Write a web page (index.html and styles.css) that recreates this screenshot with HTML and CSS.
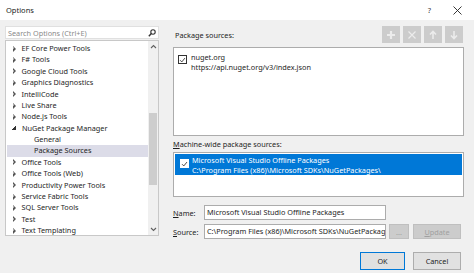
FILE: index.html
```html
<!DOCTYPE html>
<html>
<head>
<meta charset="utf-8">
<link rel="stylesheet" href="styles.css">
</head>
<body>
<div class="window">
  <div class="titlebar">
    <span class="title">Options</span>
    <span class="tb-help">?</span>
    <span class="tb-close">
      <svg width="9" height="9" viewBox="0 0 9 9"><path d="M0.5 0.5 L8.5 8.5 M8.5 0.5 L0.5 8.5" stroke="#222" stroke-width="0.9"/></svg>
    </span>
  </div>
  <div class="body">
    <div class="left">
      <div class="search">
        <span class="search-ph">Search Options (Ctrl+E)</span>
        <svg class="search-ic" width="8" height="8" viewBox="0 0 8 8"><circle cx="5" cy="3" r="2.2" fill="none" stroke="#333" stroke-width="1.1"/><path d="M3.4 4.6 L0.8 7.2" stroke="#333" stroke-width="1.4"/></svg>
      </div>
      <div class="tree">
        <div class="tree-items">
          <div class="row"><span class="arr"></span>EF Core Power Tools</div>
          <div class="row"><span class="arr"></span>F# Tools</div>
          <div class="row"><span class="arr"></span>Google Cloud Tools</div>
          <div class="row"><span class="arr"></span>Graphics Diagnostics</div>
          <div class="row"><span class="arr"></span>IntelliCode</div>
          <div class="row"><span class="arr"></span>Live Share</div>
          <div class="row"><span class="arr"></span>Node.js Tools</div>
          <div class="row"><span class="arr open"></span>NuGet Package Manager</div>
          <div class="row child">General</div>
          <div class="row child sel">Package Sources</div>
          <div class="row"><span class="arr"></span>Office Tools</div>
          <div class="row"><span class="arr"></span>Office Tools (Web)</div>
          <div class="row"><span class="arr"></span>Productivity Power Tools</div>
          <div class="row"><span class="arr"></span>Service Fabric Tools</div>
          <div class="row"><span class="arr"></span>SQL Server Tools</div>
          <div class="row"><span class="arr"></span>Test</div>
          <div class="row"><span class="arr"></span>Text Templating</div>
        </div>
        <div class="vscroll">
          <svg class="sarrow" width="7" height="5" viewBox="0 0 7 5"><path d="M1 4 L3.5 1.5 L6 4" fill="none" stroke="#606060" stroke-width="1.1"/></svg>
          <div class="track"><div class="thumb"></div></div>
          <svg class="sarrow" width="7" height="5" viewBox="0 0 7 5"><path d="M1 1 L3.5 3.5 L6 1" fill="none" stroke="#606060" stroke-width="1.1"/></svg>
        </div>
      </div>
    </div>
    <div class="right">
      <div class="toolbar">
        <span class="lbl">Package sources:</span>
        <div class="tbtns">
          <span class="tbtn"><svg width="10" height="10" viewBox="0 0 10 10"><path d="M5 1 V9 M1 5 H9" stroke="#ececec" stroke-width="2.2"/></svg></span>
          <span class="tbtn"><svg width="10" height="10" viewBox="0 0 10 10"><path d="M1.5 1.5 L8.5 8.5 M8.5 1.5 L1.5 8.5" stroke="#ececec" stroke-width="1.2"/></svg></span>
          <span class="tbtn"><svg width="10" height="10" viewBox="0 0 10 10"><path d="M5 9 V2 M2 4.5 L5 1.5 L8 4.5" fill="none" stroke="#ececec" stroke-width="1.6"/></svg></span>
          <span class="tbtn"><svg width="10" height="10" viewBox="0 0 10 10"><path d="M5 1 V8 M2 5.5 L5 8.5 L8 5.5" fill="none" stroke="#ececec" stroke-width="1.6"/></svg></span>
        </div>
      </div>
      <div class="listbox pkg">
        <div class="src">
          <span class="cb"><svg width="8" height="8" viewBox="0 0 8 8"><path d="M1.2 4.2 L3.2 6.2 L6.8 1.8" fill="none" stroke="#333" stroke-width="1"/></svg></span>
          <div class="src-text">
            <div>nuget.org</div>
            <div>https://api.nuget.org/v3/index.json</div>
          </div>
        </div>
      </div>
      <div class="lbl mw"><u>M</u>achine-wide package sources:</div>
      <div class="listbox machine">
        <div class="src selsrc">
          <span class="cb"><svg width="8" height="8" viewBox="0 0 8 8"><path d="M1.2 4.2 L3.2 6.2 L6.8 1.8" fill="none" stroke="#333" stroke-width="1"/></svg></span>
          <div class="src-text">
            <div>Microsoft Visual Studio Offline Packages</div>
            <div>C:\Program Files (x86)\Microsoft SDKs\NuGetPackages\</div>
          </div>
        </div>
      </div>
      <div class="field">
        <span class="flbl"><u>N</u>ame:</span>
        <span class="input">Microsoft Visual Studio Offline Packages</span>
      </div>
      <div class="field">
        <span class="flbl"><u>S</u>ource:</span>
        <span class="input">C:\Program Files (x86)\Microsoft SDKs\NuGetPackag</span>
        <span class="btn dis dots">...</span>
        <span class="btn dis upd"><u>U</u>pdate</span>
      </div>
      <div class="actions">
        <span class="btn ok">OK</span>
        <span class="btn cancel">Cancel</span>
      </div>
    </div>
  </div>
  <div class="footer"></div>
</div>
</body>
</html>
```
FILE: styles.css
```css
* { box-sizing: border-box; }
html, body { margin: 0; padding: 0; }
body {
  width: 474px;
  height: 276px;
  background: #ffffff;
  font-family: "Noto Sans", "Open Sans", sans-serif;
  font-size: 7.3px;
  color: #1e1e1e;
  overflow: hidden;
}
.window { width: 474px; height: 276px; display: flex; flex-direction: column; }
.titlebar {
  height: 20px;
  flex: none;
  background: #ffffff;
  display: flex;
  align-items: center;
}
.title { margin-left: 6px; font-size: 7.5px; color: #222; }
.tb-help { margin-left: auto; margin-right: 22px; font-size: 7.5px; color: #333; }
.tb-close { margin-right: 12px; display: flex; }
.body {
  flex: none;
  height: 253px;
  background: #f0f0f0;
  display: flex;
}
.footer { flex: 1; background: #ffffff; }

.left {
  width: 159px;
  padding: 6px 0 0 5px;
  display: flex;
  flex-direction: column;
}
.search {
  height: 13px;
  background: #ffffff;
  border: 1px solid #e0e0e0;
  display: flex;
  align-items: center;
  padding-left: 2px;
  padding-right: 2px;
}
.search-ph { color: #8a8a8a; }
.search-ic { margin-left: auto; }
.tree {
  margin-top: 1px;
  height: 196px;
  background: #ffffff;
  border: 1px solid #c8c8c8;
  display: flex;
}
.tree-items { flex: 1; padding-top: 2px; padding-left: 1px; }
.row {
  height: 11.375px;
  line-height: 11.375px;
  display: flex;
  align-items: center;
  white-space: nowrap;
}
.row.child { padding-left: 27px; }
.row.sel { background: #dcdce8; }
.arr {
  width: 0; height: 0;
  margin-left: 6px;
  margin-right: 5.5px;
  border-top: 3px solid transparent;
  border-bottom: 3px solid transparent;
  border-left: 3.5px solid #555;
  position: relative;
}
.arr::after {
  content: "";
  position: absolute;
  left: -3px;
  top: -1.6px;
  border-top: 1.6px solid transparent;
  border-bottom: 1.6px solid transparent;
  border-left: 1.8px solid #ffffff;
}
.arr.open {
  border: none;
  width: 4px; height: 4px;
  margin-left: 5px;
  margin-right: 6px;
  background: linear-gradient(135deg, transparent 50%, #333 50%);
}
.arr.open::after { display: none; }
.vscroll {
  width: 10px;
  background: #f0f0f0;
  display: flex;
  flex-direction: column;
  align-items: center;
}
.sarrow { flex: none; margin: 3px 0; }
.track { flex: 1; width: 100%; position: relative; }
.thumb {
  position: absolute;
  left: 1px; right: 1px;
  top: 61px;
  height: 72px;
  background: #cdcdcd;
}

.right {
  flex: 1;
  padding: 6px 10px 0 14px;
  display: flex;
  flex-direction: column;
}
.toolbar {
  height: 17px;
  display: flex;
  align-items: center;
}
.lbl { padding-left: 2px; }
.toolbar .lbl { margin-top: 1px; }
.tbtns { margin-left: auto; display: flex; gap: 3px; margin-right: 1px; }
.tbtn {
  width: 18px; height: 17px;
  background: #cccccc;
  display: flex;
  align-items: center;
  justify-content: center;
}
.listbox {
  background: #ffffff;
  border: 1px solid #acacac;
}
.pkg { margin-top: 4px; height: 89px; padding: 4px 0 0 4px; }
.src { display: flex; align-items: flex-start; }
.cb {
  width: 9px; height: 9px;
  border: 1px solid #333;
  background: #fff;
  display: flex;
  align-items: center;
  justify-content: center;
  margin-top: 3px;
  margin-right: 4px;
  flex: none;
}
.src-text { line-height: 10px; white-space: nowrap; }
.mw { margin-top: 3px; height: 10px; line-height: 10px; padding-left: 0; }
.machine { margin-top: 3px; height: 45px; padding: 1px; }
.selsrc {
  background: #0078d7;
  color: #ffffff;
  height: 21px;
  padding: 1px 0 0 5px;
}
.selsrc .cb { border-color: #fff; margin-top: 4px; margin-right: 3px; }
.field {
  display: flex;
  align-items: center;
  height: 15px;
  margin-top: 8px;
}
.field + .field { margin-top: 4px; }
.flbl { width: 31px; }
.input {
  width: 182px;
  height: 15px;
  line-height: 13px;
  background: #fff;
  border: 1px solid #acacac;
  padding: 0 2px;
  white-space: nowrap;
  overflow: hidden;
}
.btn {
  display: flex;
  align-items: center;
  justify-content: center;
  background: #e1e1e1;
  border: 1px solid #adadad;
}
.btn.dis { background: #cccccc; border-color: #bfbfbf; color: #a0a0a0; }
.dots { width: 20px; height: 15px; margin-left: 3px; }
.upd { width: 48px; height: 15px; margin-left: 4px; }
.actions {
  display: flex;
  justify-content: flex-end;
  gap: 8px;
  margin-top: 13px;
  padding-right: 3px;
}
.ok { width: 45px; height: 18px; border: 1px solid #0078d7; }
.cancel { width: 48px; height: 18px; }
```
